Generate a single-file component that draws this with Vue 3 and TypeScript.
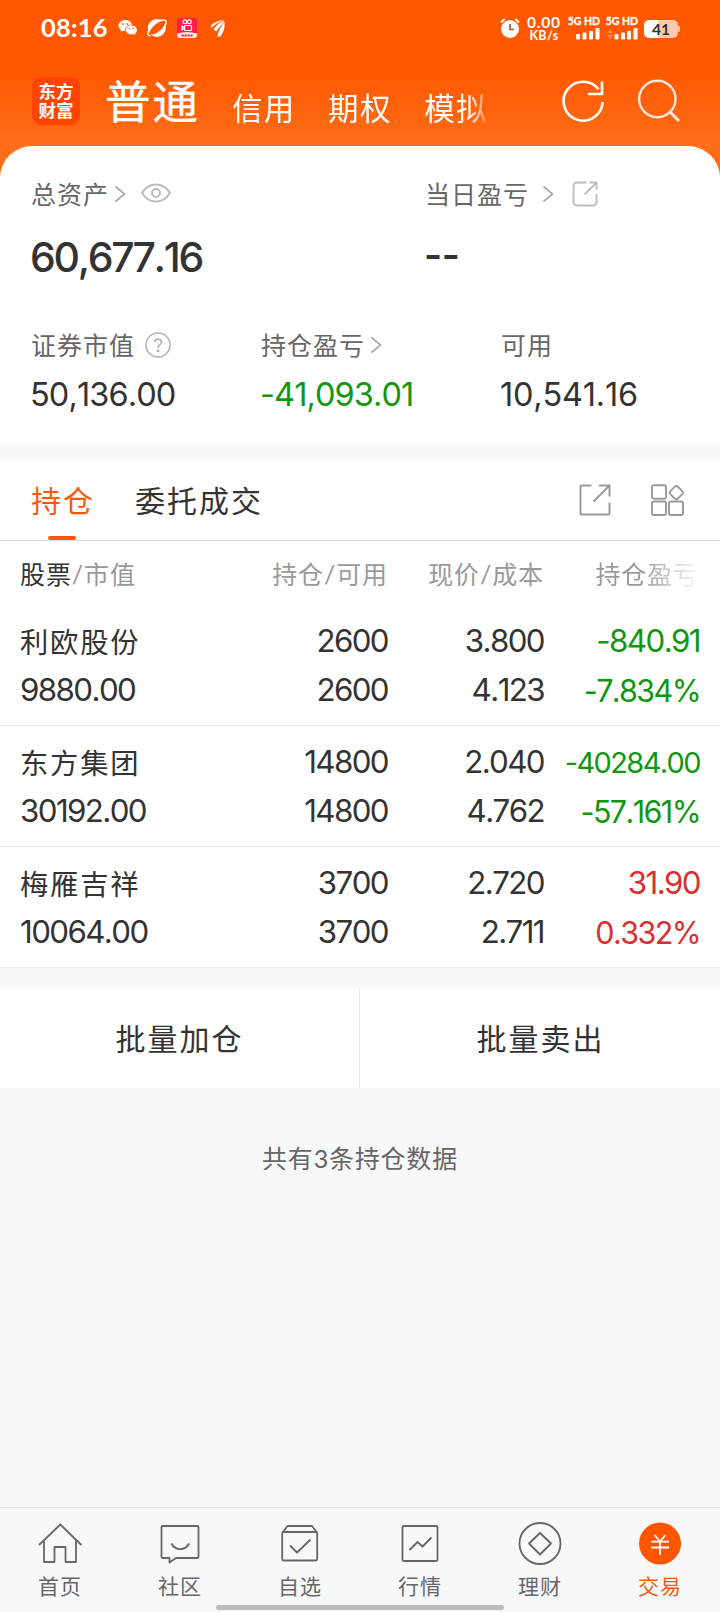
<script setup lang="ts">
interface Holding {
  name: string
  value: string
  amount: [string, string]
  price: [string, string]
  profit: [string, string]
  trend: 'up' | 'down'
}

const holdings: Holding[] = [
  {
    name: '利欧股份', value: '9880.00',
    amount: ['2600', '2600'],
    price: ['3.800', '4.123'],
    profit: ['-840.91', '-7.834%'],
    trend: 'down',
  },
  {
    name: '东方集团', value: '30192.00',
    amount: ['14800', '14800'],
    price: ['2.040', '4.762'],
    profit: ['-40284.00', '-57.161%'],
    trend: 'down',
  },
  {
    name: '梅雁吉祥', value: '10064.00',
    amount: ['3700', '3700'],
    price: ['2.720', '2.711'],
    profit: ['31.90', '0.332%'],
    trend: 'up',
  },
]

const accounts: string[] = ['信用', '期权', '模拟']
const navItems: { key: string; label: string }[] = [
  { key: 'home', label: '首页' },
  { key: 'community', label: '社区' },
  { key: 'watch', label: '自选' },
  { key: 'market', label: '行情' },
  { key: 'wealth', label: '理财' },
  { key: 'trade', label: '交易' },
]
</script>

<template>
  <div class="screen">
    <header class="top">
      <div class="status">
        <span class="clock">08:16</span>
        <svg class="s-wechat" width="20" height="18" viewBox="0 0 20 18">
          <path d="M7.3 1C3.4 1 .5 3.500 .5 6.600c0 1.800 1 3.300 2.500 4.300L2.500 13l2.400-1.200c.8.2 1.600.3 2.400.3C11 12 14 9.700 14 6.600S11.200 1 7.300 1z" fill="#fff" />
          <path d="M13.300 5.900c3.400 0 6 2.200 6 5 0 1.500-.8 2.800-2 3.700l.4 1.900-2-1c-.8.2-1.500.3-2.400.3-3.300 0-5.900-2.100-5.900-4.900s2.600-5 5.900-5z" fill="#fff" stroke="#ff5700" stroke-width=".8" />
          <g fill="#ff5700"><circle cx="5" cy="5" r=".9" /><circle cx="9.300" cy="5" r=".9" /><circle cx="11.400" cy="9.500" r=".8" /><circle cx="15.200" cy="9.500" r=".8" /></g>
        </svg>
        <svg class="s-planet" width="20" height="20" viewBox="0 0 20 20">
          <circle cx="9.800" cy="10" r="9" fill="#fff" />
          <ellipse cx="10.200" cy="9.800" rx="9.400" ry="4" transform="rotate(-40 10.200 9.800)" fill="#ff5700" />
          <path d="M3 11.500C7 5 14 1 18 2.200c2 .8 1.300 4-.7 6.500" fill="none" stroke="#fff" stroke-width="1.400" />
          <path d="M2 12C0 15.500 .3 18.300 3.500 17.500" fill="none" stroke="#fff" stroke-width="1.400" />
        </svg>
        <svg class="s-video" width="20" height="20" viewBox="0 0 20 20">
          <rect width="20" height="20" rx="3" fill="#fb1f4b" />
          <path d="M0 15.500Q10 12.500 20 15.500V17a3 3 0 0 1-3 3H3a3 3 0 0 1-3-3z" fill="#fff0dc" />
          <g fill="none" stroke="#fff" stroke-width="1.200"><circle cx="8" cy="3.800" r="1.900" /><circle cx="12.300" cy="3.800" r="1.900" /><rect x="7.500" y="7.500" width="7" height="5" rx="1" /><path d="M7.500 9.500 5 8.300v3.500l2.500-1" /></g>
          <path d="M4.500 17.500h11" stroke="#d3283c" stroke-width="2" stroke-dasharray="2.200 .8" />
        </svg>
        <svg class="s-wing" width="15" height="17" viewBox="0 0 15 17" fill="#fff">
          <path d="M.5 6C4 2 9 .5 14 0 9 2 5 4 2 7.500z" />
          <path d="M3.500 9.500C6 5 10 2 14.300.5 12 5 9 7 6.300 11.500z" />
          <path d="M7.500 16.500c.5-4 1-6 6.900-15C15 8 14 12 10 16.800z" />
        </svg>
        <div class="status-right">
          <svg width="20" height="22" viewBox="1 0 20 22">
            <circle cx="11" cy="12" r="9" fill="#fff" />
            <path d="M2 5.500 5.500 2M20 5.500 16.500 2" stroke="#fff" stroke-width="1.900" />
            <path d="M11 7v5.500h4" fill="none" stroke="#b5541c" stroke-width="1.700" />
          </svg>
          <div class="speed"><b>0.00</b><span>KB/s</span></div>
          <div class="sim">
            <span>5G HD</span>
            <svg width="24" height="12" viewBox="0 0 24 12" fill="#fff"><rect x="0" y="6" width="4" height="5.500" rx="1" /><rect x="6.500" y="4.500" width="4" height="7" rx="1" /><rect x="13" y="3" width="4" height="8.500" rx="1" /><rect x="19.500" y="0" width="4" height="11.500" rx="1" /></svg>
          </div>
          <div class="sim">
            <span>5G HD</span>
            <svg width="31" height="12" viewBox="0 0 31 12" fill="#fff"><path d="m0 5 3-4 3 4zM0 7l3 4 3-4z" fill="#ff8a4f" /><rect x="7.500" y="6" width="4" height="5.500" rx="1" /><rect x="14" y="4.500" width="4" height="7" rx="1" /><rect x="20" y="3" width="4" height="8.500" rx="1" /><rect x="26.500" y="0" width="4" height="11.500" rx="1" /></svg>
          </div>
          <div class="battery"><span>41</span></div>
        </div>
      </div>

      <div class="title-bar">
        <div class="logo"><span>东方</span><span>财富</span></div>
        <h1>普通</h1>
        <nav class="accounts"><span v-for="a in accounts" :key="a">{{ a }}</span></nav>
        <svg class="refresh" width="44" height="44" viewBox="0 0 44 44" fill="none" stroke="#fff" stroke-width="2.600">
          <path d="M41.600 23A19.500 19.500 0 1 1 37.500 10.200" />
          <path d="M41 2.500v12.500H27" />
        </svg>
        <svg class="search" width="44" height="44" viewBox="0 0 44 44" fill="none" stroke="#ffe9dc" stroke-width="2.400">
          <circle cx="20.300" cy="20" r="18.200" /><path d="m33 33 9 9" stroke-width="3" />
        </svg>
      </div>
    </header>

    <section class="summary">
      <div class="row-main">
        <div class="stat">
          <div class="label">总资产
            <svg class="chev c1" width="12" height="18" viewBox="0 0 12 18"><path d="m1.500 1.500 9 7.500-9 7.500" /></svg>
            <svg class="eye" width="30" height="22" viewBox="0 0 30 22" fill="none" stroke="#bbb" stroke-width="2"><path d="M1 11C8-1.500 22-1.500 29 11 22 23.500 8 23.500 1 11z" transform="translate(0 1) scale(1 .91)" /><circle cx="15" cy="11" r="4" /></svg>
          </div>
          <strong class="total">60,677.16</strong>
        </div>
        <div class="stat">
          <div class="label">当日盈亏
            <svg class="chev c2" width="12" height="18" viewBox="0 0 12 18"><path d="m1.500 1.500 9 7.500-9 7.500" /></svg>
            <svg class="share-s" width="26" height="26" viewBox="0 0 26 26" fill="none" stroke="#bdbdbd" stroke-width="1.900"><path d="M14.500 1.500H5A3.500 3.500 0 0 0 1.500 5v16A3.500 3.500 0 0 0 5 24.500h16a3.500 3.500 0 0 0 3.500-3.500v-8M17.500 1.500h7v7M24.500 1.500 12.500 13.500" /></svg>
          </div>
          <strong class="total dashes">--</strong>
        </div>
      </div>
      <div class="row-sub">
        <div class="stat">
          <div class="label">证券市值
            <svg class="help" width="26" height="26" viewBox="0 0 26 26" fill="none" stroke="#b3b3b3" stroke-width="1.600"><circle cx="13" cy="13" r="12" /><path d="M9.800 10.300c0-4.400 6.600-4.200 6.600-.3 0 2.600-3.300 2.700-3.300 5.700" stroke-width="1.800" /><circle cx="13.100" cy="18.700" r=".7" fill="#b3b3b3" /></svg>
          </div>
          <span class="figure">50,136.00</span>
        </div>
        <div class="stat">
          <div class="label">持仓盈亏
            <svg class="chev c3" width="12" height="18" viewBox="0 0 12 18"><path d="m1.500 1.500 9 7.500-9 7.500" /></svg>
          </div>
          <span class="figure down">-41,093.01</span>
        </div>
        <div class="stat">
          <div class="label">可用</div>
          <span class="figure available">10,541.16</span>
        </div>
      </div>
    </section>

    <section class="positions">
      <div class="tabs">
        <span class="tab active">持仓</span>
        <span class="tab">委托成交</span>
        <svg class="share" width="32" height="32" viewBox="0 0 32 32" fill="none" stroke="#999" stroke-width="1.900"><path d="M12.500 1.500h-10a1 1 0 0 0-1 1v27a1 1 0 0 0 1 1h27a1 1 0 0 0 1-1v-11M20 1.500h10.500v11M30 2 14.500 17.500" /></svg>
        <svg class="grid-icon" width="34" height="32" viewBox="0 0 34 32" fill="none" stroke="#999" stroke-width="1.900"><rect x="1" y="1.200" width="14" height="13.500" rx="1.800" /><rect x="1" y="17.500" width="14" height="13.500" rx="1.800" /><rect x="18" y="17.500" width="14" height="13.500" rx="1.800" /><rect x="20" y="3.300" width="10.600" height="10.600" rx="2.400" transform="rotate(45 25.300 8.600)" /></svg>
      </div>
      <div class="cols head">
        <span><em>股票</em>/市值</span>
        <span>持仓/可用</span>
        <span>现价/成本</span>
        <span class="fade">持仓盈亏</span>
      </div>
      <div v-for="h in holdings" :key="h.name" class="cols holding">
        <div><span class="name">{{ h.name }}</span><span>{{ h.value }}</span></div>
        <div><span v-for="(t, i) in h.amount" :key="i">{{ t }}</span></div>
        <div><span v-for="(t, i) in h.price" :key="i">{{ t }}</span></div>
        <div :class="h.trend"><span v-for="(t, i) in h.profit" :key="i" :class="{ long: t.length > 8, percent: t.endsWith('%') }">{{ t }}</span></div>
      </div>
    </section>

    <div class="actions"><button>批量加仓</button><button>批量卖出</button></div>
    <p class="count">共有3条持仓数据</p>

    <footer class="nav">
      <div v-for="n in navItems" :key="n.key" class="nav-item" :class="{ current: n.key === 'trade' }">
        <svg width="44" height="44" viewBox="0 0 44 44" fill="none" stroke="#666" stroke-width="1.800" stroke-linejoin="round">
          <template v-if="n.key === 'home'"><path d="M1 24 22.300 3.500 43.500 24M6 19.500V41h10.500V26h11v15H38V19.500" /></template>
          <template v-else-if="n.key === 'community'"><path d="M4.500 5h35a1 1 0 0 1 1 1v30a1 1 0 0 1-1 1H18l-6.500 4.500V37h-7a1 1 0 0 1-1-1V6a1 1 0 0 1 1-1z" /><path d="M13.500 22.500c3.500 7.500 14 7.500 17.500 0" /></template>
          <template v-else-if="n.key === 'watch'"><rect x="4.200" y="11" width="35" height="28.500" rx="1.500" /><path d="M4.500 11.500 9.500 5h24.500l5 6.500M12 24.500l7 7 13.500-13" /></template>
          <template v-else-if="n.key === 'market'"><rect x="4.500" y="5" width="35" height="35" rx="1.200" /><path d="m11.500 29 8-8 5 4.500 9-9" /></template>
          <template v-else-if="n.key === 'wealth'"><circle cx="22" cy="22.500" r="20.500" /><path d="M22 12 33 22.500 22 33.500 11 22.500z" /></template>
          <template v-else><circle cx="22" cy="22.500" r="21" fill="#ff5500" stroke="none" /><path d="m16.500 14 5.500 6.500 5.500-6.500M13 20.700h18M13 26.500h18M22 20.500V34" stroke="#fff" /></template>
        </svg>
        <span>{{ n.label }}</span>
      </div>
      <div class="home-bar"></div>
    </footer>
  </div>
</template>

<style>
body { margin: 0; }
</style>

<style scoped>
.screen {
  width: 720px; height: 1612px; box-sizing: border-box; display: flex; flex-direction: column;
  background: #f7f8fa; color: #333; overflow: hidden; font-kerning: none;
  font-family: Lato, "Noto Sans CJK SC", sans-serif; font-size: 25px;
}
svg { display: block; flex: none; }
.top { height: 178px; flex: none; background: linear-gradient(#ff5700 0, #ff5800 68px, #ff6d18 146px, #ff6d18 100%); color: #fff; }
.status { height: 56px; display: flex; align-items: center; padding-left: 41px; }
.clock { width: 77px; font-size: 25.500px; font-weight: 700; line-height: 30px; letter-spacing: .2px; margin-top: -2px; }
.s-planet { margin-left: 9px; }
.s-video { margin-left: 10px; }
.s-wing { margin-left: 13px; }
.status-right { margin-left: auto; padding-right: 42px; display: flex; align-items: center; }
.speed { width: 34px; margin: 1px 7px 0; display: flex; flex-direction: column; align-items: center; }
.speed b { font: 700 15.500px/15px Lato, sans-serif; letter-spacing: .8px; }
.speed span { font: 700 12.500px/12px Lato, sans-serif; letter-spacing: .4px; white-space: nowrap; }
.sim { width: 32px; margin-right: 6px; display: flex; flex-direction: column; align-items: flex-end; gap: 1px; }
.sim span { font: 700 10.500px/11px Lato, sans-serif; white-space: nowrap; -webkit-text-stroke: .3px #fff; }
.battery { position: relative; width: 34px; height: 18px; border-radius: 5px; background: linear-gradient(90deg, #fff 41%, #ffc9b0 41%); color: #333; text-align: center; margin-top: 2px; }
.battery::after { content: ""; position: absolute; left: 34px; top: 6px; width: 2px; height: 6px; border-radius: 1px; background: #ffc9b0; }
.battery span { display: block; font: 700 15.500px/19px Lato, sans-serif; }
.title-bar { height: 90px; display: flex; align-items: center; padding-left: 32px; }
.logo { width: 48px; height: 48px; border-radius: 9px; background: #ff4500; display: flex; flex-direction: column; align-items: center; justify-content: center; font-weight: 700; font-size: 17.500px; line-height: 19px; }
h1 { margin: 1px 0 0 25px; width: 94px; font-size: 45.500px; font-weight: 400; line-height: 56px; letter-spacing: 2px; white-space: nowrap; -webkit-text-stroke: .3px #fff; }
.accounts { display: flex; gap: 32.500px; margin: 14px 0 0 33px; width: 256px; font-size: 30.500px; line-height: 40px; letter-spacing: 1.300px; white-space: nowrap; -webkit-mask-image: linear-gradient(90deg, #000 235px, transparent 262px); mask-image: linear-gradient(90deg, #000 235px, transparent 262px); }
.refresh { margin-left: 73px; }
.search { margin-left: 32px; }
.summary { height: 298px; margin-top: -32px; flex: none; background: #fff; border-radius: 32px 32px 0 0; }
.row-main { display: grid; grid-template-columns: 394px 1fr; padding: 32px 0 0 31px; }
.row-sub { display: grid; grid-template-columns: 230px 240px 1fr; padding: 46px 0 0 31px; }
.label { display: flex; align-items: center; height: 32px; color: #666; letter-spacing: 1px; line-height: 32px; white-space: nowrap; }
.chev { fill: none; stroke: #aaa; stroke-width: 1.700; }
.c1 { margin-left: 5px; }
.eye { margin-left: 15px; margin-top: -3px; }
.c2 { margin-left: 13px; }
.share-s { margin-left: 18px; margin-top: -1px; }
.help { margin-left: 10px; }
.c3 { margin-left: 5px; }
.total { display: block; margin: 21px 0 0 -1px; font-family: Inter, sans-serif; font-size: 41px; line-height: 52px; font-weight: 500; letter-spacing: -2.300px; }
.dashes { margin-top: 19px; margin-bottom: 2px; font-size: 39px; font-weight: 600; letter-spacing: -.3px; }
.figure { display: block; margin: 14px 0 0 -1px; font-family: Inter, sans-serif; font-size: 32.500px; line-height: 40px; letter-spacing: -.900px; }
.available { letter-spacing: -.2px; }
.down { color: #119611; }
.up { color: #d83030; }
.positions { margin-top: 16px; background: #fff; flex: none; }
.tabs { height: 80px; border-bottom: 1px solid #ddd; display: flex; align-items: center; padding-left: 31px; font-size: 30px; letter-spacing: 2px; }
.tab { position: relative; margin-right: 40px; line-height: 80px; }
.active { color: #f55a10; }
.active::after { content: ""; position: absolute; left: 17px; bottom: 0; width: 28px; height: 4px; border-radius: 2px; background: #ff5500; }
.share { margin-left: 276px; }
.grid-icon { margin-left: 40px; }
.cols { display: grid; grid-template-columns: 200px 168px 156px 156px; padding-left: 20px; text-align: right; }
.cols > :first-child { text-align: left; }
.head { height: 64px; line-height: 66px; color: #999; letter-spacing: .9px; }
.head em { font-style: normal; color: #333; }
.fade { padding-right: 1px; -webkit-mask-image: linear-gradient(90deg, #000 95px, transparent 158px); mask-image: linear-gradient(90deg, #000 95px, transparent 158px); }
.holding { height: 120px; border-bottom: 1px solid #ebebeb; font-family: Inter, "Noto Sans CJK SC", sans-serif; font-size: 31.300px; letter-spacing: -1.600px; }
.holding div { display: flex; flex-direction: column; padding-top: 12px; }
.holding span { display: block; height: 49px; line-height: 49px; white-space: nowrap; }
.holding .name { height: 48px; line-height: 47px; margin-bottom: 1px; font-family: "Noto Sans CJK SC", sans-serif; font-size: 28.300px; letter-spacing: 1.800px; }
.holding .long { font-size: 29px; }
.holding .percent { font-size: 30.500px; }
.actions { height: 100px; margin-top: 20px; flex: none; display: flex; background: #fff; }
button { flex: 1; border: 0; padding: 0 0 0 1px; background: none; color: #333; font: inherit; font-size: 30px; letter-spacing: 2px; line-height: 100px; }
button:first-child { flex: 0 0 360px; padding: 0; border-right: 1px solid #e8e8e8; }
.count { margin: 50px 0 0; text-align: center; line-height: 40px; color: #666; letter-spacing: .8px; }
.nav { position: relative; height: 104px; margin-top: auto; border-top: 1px solid #e0e0e0; display: flex; flex: none; }
.nav-item { width: 120px; display: flex; flex-direction: column; align-items: center; padding-top: 13px; font-size: 21px; line-height: 30px; letter-spacing: 1px; color: #666; }
.nav-item span { margin-top: 6px; }
.current { color: #f05a10; }
.home-bar { position: absolute; left: 216px; top: 97px; width: 288px; height: 5px; border-radius: 3px; background: #bdbdbd; }
</style>
